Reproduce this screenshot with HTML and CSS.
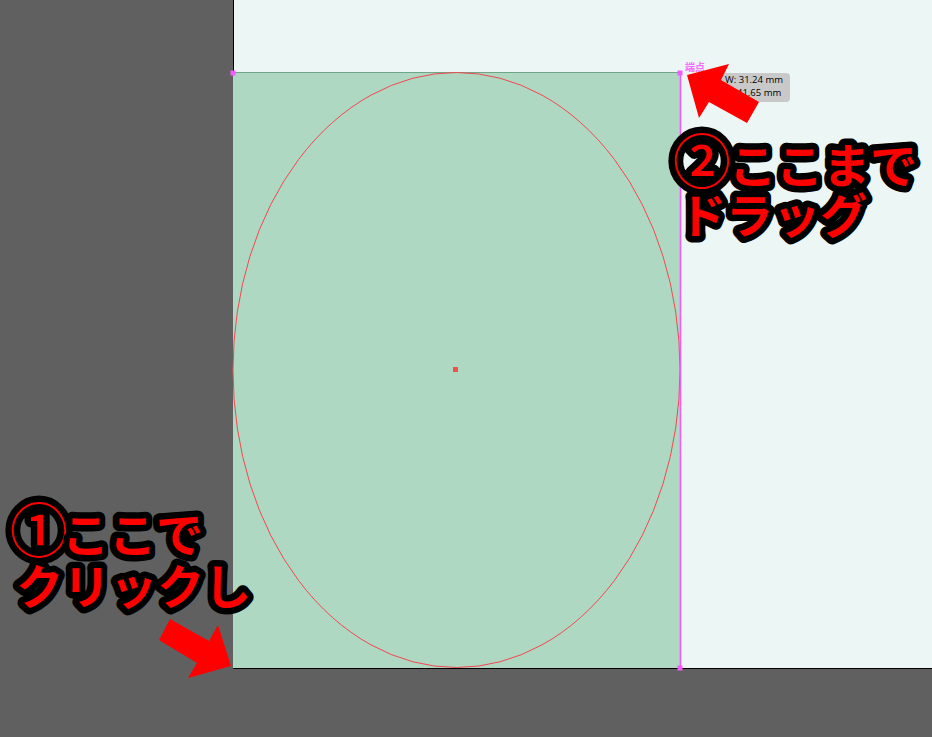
FILE: index.html
```html
<!DOCTYPE html>
<html lang="ja">
<head>
    <meta charset="UTF-8">
    <title>ドラッグ</title>
    <link rel="stylesheet" href="styles.css">
</head>
<body>
    <div class="canvas">
        <svg class="layer" width="932" height="737" viewBox="0 0 932 737">
            <!-- page -->
            <rect x="233" y="0" width="699" height="668" fill="#ecf6f4"/>
            <path d="M233.5 0V668.5H932" fill="none" stroke="#000" stroke-width="1"/>
            <!-- dragged rectangle -->
            <rect x="233" y="72" width="447" height="596" fill="#aed8c2"/>
            <path d="M234 72.5H680" stroke="#6fa58a" stroke-width="1"/>
            <ellipse cx="456.5" cy="370" rx="223.5" ry="297.5" fill="none" stroke="#f4474f" stroke-width="1"/>
            <rect x="453" y="367" width="5" height="5" fill="#f0514c"/>
            <path d="M680.5 72V668" stroke="#f25cff" stroke-width="1.6"/>
            <!-- handles -->
            <path d="M230.5 70.5h5v5h-5z M677.5 70.5h5v5h-5z M677.5 665.5h5v5h-5z" fill="#f25cff"/>
        </svg>

        <div class="tooltip">W: 31.24 mm<br>H: 41.65 mm</div>
        <span class="snap-label">端点</span>

        <svg class="layer" width="932" height="737" viewBox="0 0 932 737">
            <!-- arrows -->
            <polygon points="729,64 687,75 699,118 709,102 747,123 759,102 721,80" fill="#f00"/>
            <polygon points="231,666 188,678 197,663 159,640 170,619 209,641 218,625" fill="#f00"/>
            <!-- notes -->
            <text class="note" x="679" y="233">ドラッグ</text>
            <text class="note" x="673" y="183"><tspan class="circled">②</tspan><tspan x="729">ここまで</tspan></text>
            <text class="note" x="16" y="604">クリックし</text>
            <text class="note" x="10" y="552"><tspan class="circled">①</tspan><tspan x="62">ここで</tspan></text>
        </svg>
    </div>
</body>
</html>
```

FILE: styles.css
```css
html, body {
    margin: 0;
    padding: 0;
    background-color: #606060;
}
.canvas {
    position: relative;
    width: 932px;
    height: 737px;
    overflow: hidden;
    font-family: "Noto Sans CJK JP", "Noto Sans", sans-serif;
}
.layer {
    position: absolute;
    left: 0;
    top: 0;
}
.tooltip {
    position: absolute;
    left: 718px;
    top: 73px;
    width: 65px;
    height: 28px;
    padding: 1px 0 0 7px;
    border-radius: 4px;
    background-color: #c9c9c9;
    color: #000;
    font-family: "Open Sans", "Liberation Sans", sans-serif;
    font-size: 9.5px;
    line-height: 12.5px;
}
.snap-label {
    position: absolute;
    left: 685px;
    top: 60px;
    color: #f76cff;
    font-size: 10px;
    font-weight: 700;
    line-height: 14px;
}
.note {
    fill: #f00;
    stroke: #000;
    stroke-width: 13px;
    stroke-linejoin: round;
    paint-order: stroke fill;
    font-weight: 700;
    font-size: 47px;
}
.circled {
    font-size: 58px;
    font-weight: 500;
}
```
